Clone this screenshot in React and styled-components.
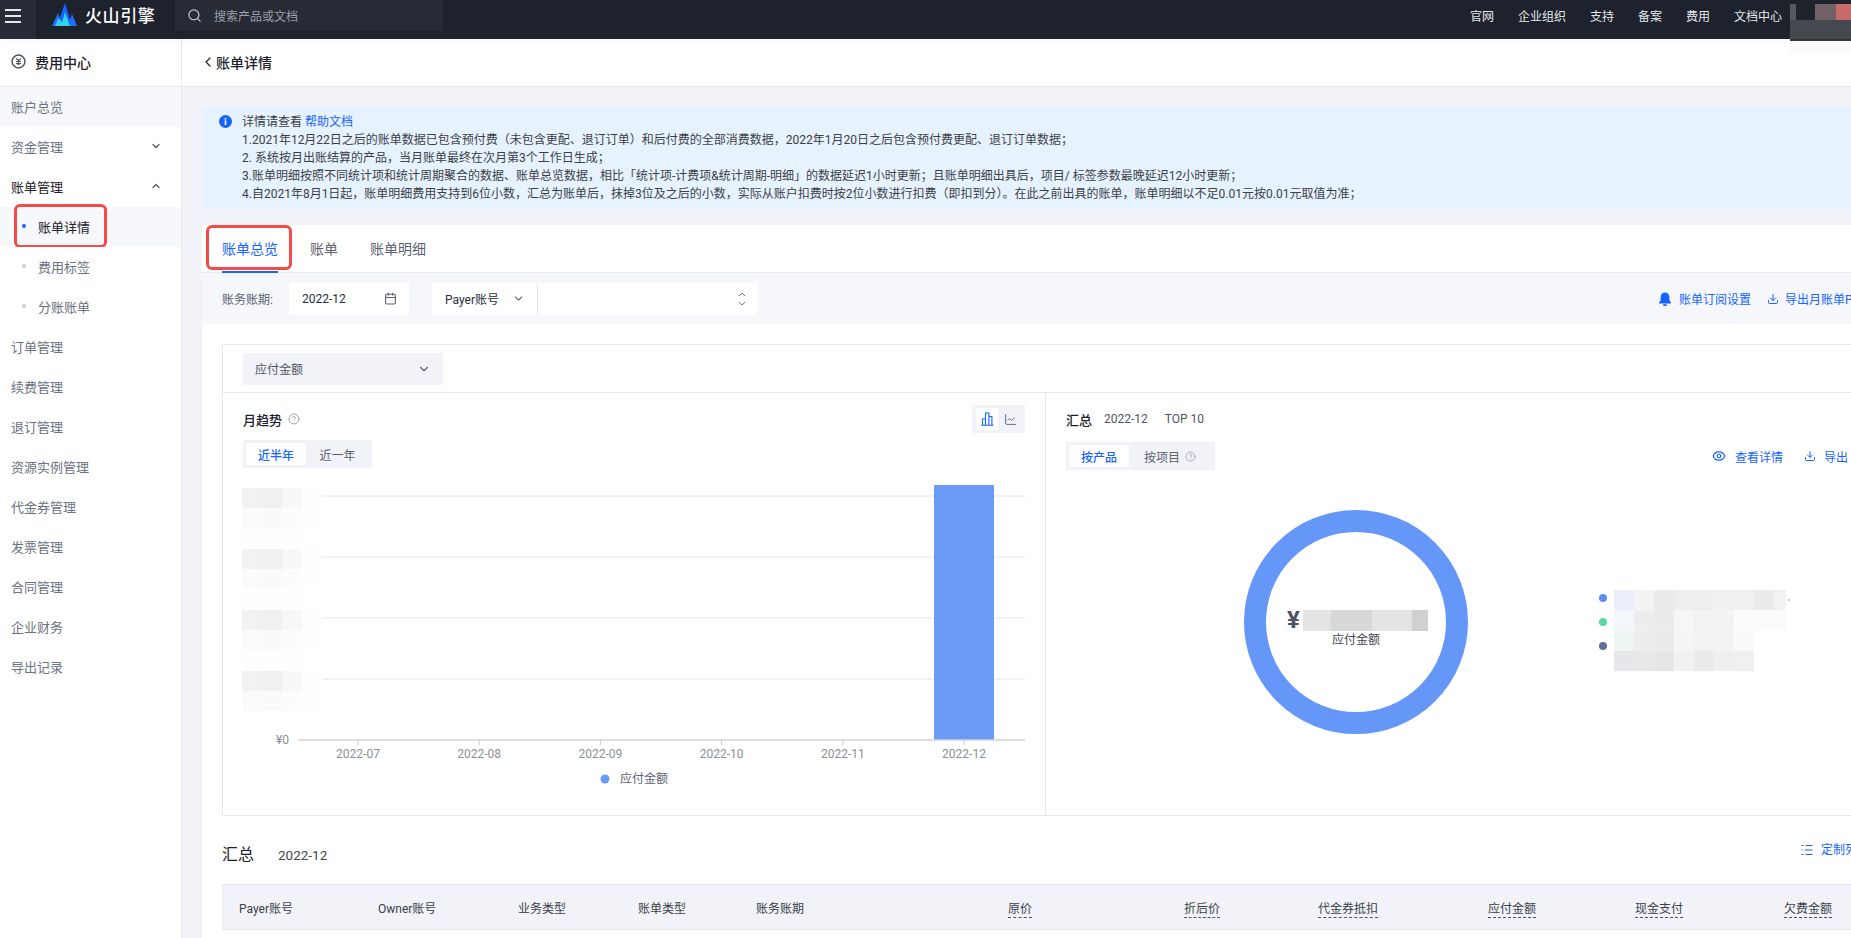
import styled, { createGlobalStyle } from "styled-components";
import { ChevronDown, ChevronLeft, ChevronUp, Search, Calendar, Download, Eye, CircleHelp, ChartLine } from "lucide-react";

const GlobalStyle = createGlobalStyle`
    html, body {
        margin: 0;
        padding: 0;
        height: 100%;
        overflow: hidden;
        background: #f1f3f8;
    }
    body {
        font-family: Roboto, "Noto Sans CJK SC", sans-serif;
        font-size: 12px;
        color: #42464e;
    }
    * {
        box-sizing: border-box;
    }
`;

const Page = styled.div`
    display: flex;
    flex-direction: column;
    height: 938px;
    width: 1851px;
    overflow: hidden;
`;

const TopBar = styled.header`
    position: relative;
    z-index: 1;
    flex: 0 0 39px;
    display: flex;
    background: #1d222c;
    color: #e4e6ea;
    box-shadow: 0 2px 8px rgba(0, 0, 0, 0.03);
`;

const MenuButton = styled.div`
    width: 36px;
    display: flex;
    flex-direction: column;
    gap: 4.5px;
    padding: 9px 5px 0;
    background: #262c38;
    span {
        height: 1.5px;
        width: 16px;
        background: #e5e7eb;
    }
`;

const Brand = styled.div`
    width: 139px;
    display: flex;
    align-items: flex-start;
    padding: 3px 0 0 16px;
    gap: 8px;
`;

const BrandName = styled.span`
    font-family: "Noto Sans CJK SC", sans-serif;
    font-size: 17px;
    font-weight: 500;
    letter-spacing: 0.6px;
    line-height: 24px;
    color: #fff;
`;

const SearchBox = styled.div`
    width: 268px;
    height: 31px;
    display: flex;
    align-items: center;
    gap: 12px;
    padding-left: 12px;
    background: #262b36;
    color: #9ba0ab;
`;

const TopNav = styled.nav`
    position: absolute;
    right: 69px;
    top: 0;
    height: 31px;
    display: flex;
    align-items: center;
    gap: 24px;
`;

const AvatarBlur = styled.div`
    position: absolute;
    right: 0;
    top: 4px;
    width: 61px;
    height: 49px;
    display: grid;
    grid-template-columns: 6px 19px 21px 15px;
    grid-template-rows: 16px 19px 2px 12px;
`;

const BlurCell = styled.i`
    display: block;
    background: ${(p) => p.$color};
    grid-column: ${(p) => p.$span || "auto"};
`;

const Body = styled.div`
    flex: 1;
    display: flex;
    min-height: 0;
`;

const Sidebar = styled.aside`
    flex: 0 0 182px;
    background: #fff;
    border-right: 1px solid #e5e8ef;
`;

const SideTitle = styled.div`
    height: 48px;
    display: flex;
    align-items: center;
    gap: 9px;
    padding: 0 0 2px 11px;
    font-size: 14px;
    font-weight: 500;
    color: #1d2129;
    border-bottom: 1px solid #e5e8ef;
`;

const SideItem = styled.div`
    height: 40px;
    display: flex;
    align-items: center;
    justify-content: space-between;
    padding: 0 19px 2px ${(p) => (p.$sub ? "22px" : "11px")};
    font-size: 13px;
    color: ${(p) => (p.$dark ? "#1d2129" : "#6b7280")};
    background: ${(p) => (p.$shaded ? "#f6f8fb" : "#fff")};
    position: relative;
`;

const SideLabel = styled.span`
    display: flex;
    align-items: center;
    gap: 12px;
`;

const Dot = styled.i`
    width: 4px;
    height: 4px;
    border-radius: 50%;
    background: ${(p) => (p.$active ? "#1664ff" : "#c9cdd4")};
`;

const RedMark = styled.div`
    position: absolute;
    border: 3.5px solid #f54a45;
    border-radius: 6px;
    pointer-events: none;
    left: ${(p) => p.$left}px;
    top: ${(p) => p.$top}px;
    width: ${(p) => p.$width}px;
    height: ${(p) => p.$height}px;
`;

const Main = styled.main`
    flex: 1;
    min-width: 0;
    overflow: hidden;
`;

const PageHead = styled.div`
    height: 48px;
    display: flex;
    align-items: center;
    padding: 0 0 2px 18px;
    font-size: 14px;
    font-weight: 500;
    color: #1d2129;
    background: #fff;
    border-bottom: 1px solid #e5e8ef;
`;

const Content = styled.div`
    width: 1705px;
    padding: 20px 0 0 20px;
`;

const Alert = styled.div`
    position: relative;
    height: 102px;
    padding: 6px 0 0 40px;
    background: #e6f2fe;
    line-height: 18px;
    color: #3b3f47;
    white-space: nowrap;
`;

const AlertIcon = styled.svg`
    position: absolute;
    left: 17px;
    top: 8px;
`;

const Link = styled.a`
    color: #1664ff;
    display: inline-flex;
    align-items: center;
    gap: ${(p) => p.$gap || 6}px;
`;

const Panel = styled.section`
    position: relative;
    margin-top: 16px;
    background: #fff;
    padding-bottom: 20px;
`;

const Tabs = styled.div`
    height: 48px;
    display: flex;
    gap: 32px;
    padding-left: 20px;
    border-bottom: 1px solid #e5e8ef;
`;

const Tab = styled.div`
    height: 48px;
    flex-shrink: 0;
    line-height: 48px;
    font-size: 14px;
    color: ${(p) => (p.$active ? "#1664ff" : "#5b6270")};
    border-bottom: ${(p) => (p.$active ? "2px solid #1664ff" : "none")};
`;

const FilterBar = styled.div`
    height: 51px;
    display: flex;
    align-items: center;
    justify-content: space-between;
    padding: 0 20px;
    background: #f5f7fb;
`;

const FilterGroup = styled.div`
    display: flex;
    align-items: center;
`;

const FilterLabel = styled.span`
    width: 67px;
    color: #5b6270;
`;

const Field = styled.div`
    width: ${(p) => p.$width}px;
    height: 32px;
    display: flex;
    align-items: center;
    justify-content: space-between;
    padding: 0 12px 0 13px;
    background: #fff;
    color: #2a2e36;
    margin-left: ${(p) => p.$gap || 0}px;
    border-left: ${(p) => (p.$divider ? "1px solid #e5e8ef" : "none")};
`;

const Actions = styled.div`
    display: flex;
    align-items: center;
    gap: ${(p) => p.$gap || 16}px;
`;

const Card = styled.div`
    margin: 20px 20px 0;
    border: 1px solid #e5e8ef;
`;

const CardTop = styled.div`
    height: 48px;
    display: flex;
    align-items: center;
    padding-left: 20px;
    border-bottom: 1px solid #e5e8ef;
`;

const MetricSelect = styled.div`
    width: 200px;
    height: 32px;
    display: flex;
    align-items: center;
    justify-content: space-between;
    padding: 0 12px;
    background: #f1f3f8;
    color: #4e5561;
`;

const Columns = styled.div`
    display: grid;
    grid-template-columns: 822px 1fr;
    height: 422px;
`;

const ChartPane = styled.div`
    padding-top: 12px;
    border-left: ${(p) => (p.$right ? "1px solid #e5e8ef" : "none")};
    overflow: hidden;
`;

const PaneHead = styled.div`
    height: 28px;
    display: flex;
    align-items: center;
    justify-content: space-between;
    padding: 0 20px;
`;

const PaneTitle = styled.div`
    display: flex;
    align-items: center;
    gap: 12px;
    color: #4e5561;
    strong {
        font-size: 13px;
        font-weight: 500;
        color: #1d2129;
    }
    span + span {
        margin-left: 5px;
    }
`;

const HelpIcon = styled(CircleHelp)`
    flex-shrink: 0;
    margin-left: ${(p) => p.$shift || 0}px;
`;

const ViewToggle = styled.div`
    width: 53px;
    height: 28px;
    display: flex;
    align-items: center;
    justify-content: space-between;
    padding: 0 4px;
    background: #f1f3f8;
`;

const ViewItem = styled.div`
    width: 22px;
    height: 22px;
    display: flex;
    align-items: center;
    justify-content: center;
    background: ${(p) => (p.$active ? "#fff" : "transparent")};
    color: ${(p) => (p.$active ? "#1664ff" : "#4e5561")};
`;

const PaneRow = styled.div`
    display: flex;
    align-items: center;
    justify-content: space-between;
    padding: 0 ${(p) => p.$right || 20}px 0 20px;
    margin-top: ${(p) => p.$top}px;
`;

const Segment = styled.div`
    height: 28px;
    display: flex;
    align-items: center;
    padding: 0 3px;
    background: #f1f3f8;
`;

const SegmentItem = styled.div`
    width: ${(p) => p.$width || 60}px;
    height: 22px;
    flex-shrink: 0;
    display: flex;
    align-items: center;
    justify-content: ${(p) => (p.$start ? "flex-start" : "center")};
    gap: 5px;
    background: ${(p) => (p.$active ? "#fff" : "transparent")};
    color: ${(p) => (p.$active ? "#1664ff" : "#5b6270")};
    font-weight: ${(p) => (p.$active ? 500 : 400)};
    padding-left: ${(p) => (p.$start ? "15px" : "0")};
    white-space: nowrap;
`;

const ChartSvg = styled.svg`
    display: block;
    margin-top: 8px;
    text {
        font-family: Roboto, "Noto Sans CJK SC", sans-serif;
    }
`;

const TableHead = styled.div`
    height: 68px;
    display: flex;
    align-items: flex-start;
    justify-content: space-between;
    padding: 0 10px 0 0;
    margin: 0 20px;
`;

const TableTitle = styled.div`
    display: flex;
    align-items: center;
    gap: 24px;
    margin-top: 27px;
    line-height: 24px;
    font-size: 13.5px;
    strong {
        font-size: 16px;
        font-weight: 400;
        color: #1d2129;
    }
`;

const CustomLink = styled(Link)`
    margin-top: 26px;
    line-height: 16px;
`;

const Table = styled.table`
    width: 1647px;
    margin: 0 20px;
    border-collapse: collapse;
    table-layout: fixed;
`;

const Th = styled.th`
    height: 45px;
    width: ${(p) => p.$width}px;
    padding: ${(p) => (p.$right ? "0 16px 0 0" : "0 0 0 17px")};
    text-align: ${(p) => (p.$right ? "right" : "left")};
    font-weight: 400;
    color: #3a3f48;
    background: #f1f3f8;
    border-top: 1px solid #e5e8ef;
    border-bottom: 1px solid #e5e8ef;
`;

const Hint = styled.span`
    padding-bottom: 1px;
    border-bottom: 1px dashed #4e5561;
`;

const navLinks = ["官网", "企业组织", "支持", "备案", "费用", "文档中心"];

const alertLines = [
    "1.2021年12月22日之后的账单数据已包含预付费（未包含更配、退订订单）和后付费的全部消费数据，2022年1月20日之后包含预付费更配、退订订单数据；",
    "2. 系统按月出账结算的产品，当月账单最终在次月第3个工作日生成；",
    "3.账单明细按照不同统计项和统计周期聚合的数据、账单总览数据，相比「统计项-计费项&统计周期-明细」的数据延迟1小时更新；且账单明细出具后，项目/ 标签参数最晚延迟12小时更新；",
    "4.自2021年8月1日起，账单明细费用支持到6位小数，汇总为账单后，抹掉3位及之后的小数，实际从账户扣费时按2位小数进行扣费（即扣到分）。在此之前出具的账单，账单明细以不足0.01元按0.01元取值为准；",
];

const lowerMenu = ["订单管理", "续费管理", "退订管理", "资源实例管理", "代金券管理", "发票管理", "合同管理", "企业财务", "导出记录"];

const months = ["2022-07", "2022-08", "2022-09", "2022-10", "2022-11", "2022-12"];

const columns = [
    { label: "Payer账号", width: 139 },
    { label: "Owner账号", width: 140 },
    { label: "业务类型", width: 120 },
    { label: "账单类型", width: 118 },
    { label: "账务账期", width: 141 },
    { label: "原价", width: 168, right: true },
    { label: "折后价", width: 188, right: true },
    { label: "代金券抵扣", width: 158, right: true },
    { label: "应付金额", width: 158, right: true },
    { label: "现金支付", width: 147, right: true },
    { label: "欠费金额", width: 149, right: true },
    { label: "", width: 21 },
];

const axisMosaic = [
    ["#f2f2f2", "#f0f0f0", "#f8f8f8", "#fdfdfd"],
    ["#fbfbfb", "#fafafa", "#fcfcfc", "#fefefe"],
    ["#fefefe", "#fefefe", "#fefefe", "#ffffff"],
];

const legendMosaic = [
    ["#eaeefb", "#f3f3f3", "#ebebeb", "#eeeeee", "#eeeeee", "#f0f0f0", "#f0f0f0", "#ebebeb", "#f2f2f2"],
    ["#f3f6fa", "#ededed", "#ebebeb", "#f6f6f6", "#f2f2f2", "#f3f3f3", "#fbfbfb", "#fbfbfb", "#fbfbfb"],
    ["#eef6f1", "#ededed", "#ebebeb", "#f5f5f5", "#f2f2f2", "#f3f3f3", "#fafafa", "#ffffff", "#ffffff"],
    ["#e6e7eb", "#e8e8e8", "#e6e6e6", "#f1f1f1", "#ebebeb", "#efefef", "#f0f0f0", "#ffffff", "#ffffff"],
];

const amountMosaic = [
    { x: 0, w: 28, c: "#e4e4e5" },
    { x: 28, w: 41, c: "#d8d8d9" },
    { x: 69, w: 40, c: "#e4e4e5" },
    { x: 109, w: 16, c: "#d0d0d2" },
];

const BrandLogo = () => (
    <svg width="25" height="23" viewBox="0 0 25 23">
        <polygon points="0,23 6,10 10,23" fill="#1f6fff" />
        <polygon points="5,23 13,0 20,23" fill="#1664ff" />
        <polygon points="16,23 20,11 25,23" fill="#1f6fff" />
        <polygon points="3,23 6.5,15 13,23" fill="#36d2e6" />
        <polygon points="9,23 13,9 18,23" fill="#2fd4e8" />
    </svg>
);

const CostIcon = () => (
    <svg width="15" height="15" viewBox="0 0 14 14" fill="none">
        <circle cx="7" cy="7" r="6" stroke="#4e5561" strokeWidth="1.4" />
        <path d="M4.8 4.2L7 6l2.2-1.8M4.6 7h4.8M4.6 9h4.8M7 6v4.4" stroke="#4e5561" strokeWidth="1.1" />
    </svg>
);

const BellIcon = () => (
    <svg width="14" height="14" viewBox="0 0 13 14" fill="#1664ff">
        <path d="M6.5 0.5a4.4 4.4 0 0 0-4.4 4.4v3.4L0.6 10.6v0.9h11.8v-0.9L10.9 8.3V4.9A4.4 4.4 0 0 0 6.5 0.5z" />
        <path d="M4.5 12.3h4a2 2 0 0 1-4 0z" />
    </svg>
);

const BarsIcon = () => (
    <svg width="13" height="14" viewBox="0 0 13 14" fill="none" stroke="currentColor" strokeWidth="1.1">
        <path d="M0.5 13.3h12M1.5 13V7h3v6M4.5 13V1h3.4v12M7.9 13V4.5h3v8.5" />
    </svg>
);

const ColumnsIcon = () => (
    <svg width="12" height="12" viewBox="0 0 12 12" fill="none" stroke="#1664ff" strokeWidth="1.2">
        <path d="M0.5 1.5h2M4.5 1.5h7M0.5 6h1M3.5 6h8M0.5 10.5h2M4.5 10.5h7" />
    </svg>
);

const StepperIcon = () => (
    <svg width="8" height="14" viewBox="0 0 8 14" fill="none" stroke="#6b7280" strokeWidth="1">
        <path d="M1 4l3-3 3 3M1 10l3 3 3-3" />
    </svg>
);

// y axis labels are blurred out in the screenshot, these blocks stand in for them
const AxisBlur = () => (
    <g>
        <rect x="14" y="7" width="84" height="206" fill="#fff" />
        {[12, 73, 134, 195].map((top) =>
            axisMosaic.map((row, r) =>
                row.map((color, c) => (
                    <rect key={`${top}-${r}-${c}`} x={19 + c * 20} y={top + r * 20} width="20" height={r === 2 && top === 195 ? 0 : 20} fill={color} />
                ))
            )
        )}
    </g>
);

const TrendChart = () => (
    <ChartSvg width="822" height="330" viewBox="0 0 822 330">
        {[20, 81, 142, 203].map((y) => (
            <line key={y} x1="98" x2="802" y1={y} y2={y} stroke="#e4e6ea" strokeWidth="1" />
        ))}
        <AxisBlur />
        <rect x="711" y="9" width="60" height="255" fill="#6a9bf9" />
        <line x1="75" x2="802" y1="264" y2="264" stroke="#d0d3d8" strokeWidth="1.6" />
        <text x="66" y="268" textAnchor="end" fontSize="12" fill="#8a8f98">¥0</text>
        {months.map((m, i) => {
            const x = 135 + i * 121.2;
            return (
                <g key={m}>
                    <line x1={x} x2={x} y1="264" y2="269" stroke="#c8ccd2" />
                    <text x={x} y="282" textAnchor="middle" fontSize="12" fill="#8a8f98">{m}</text>
                </g>
            );
        })}
        <circle cx="382" cy="303" r="4.5" fill="#6a9bf9" />
        <text x="397" y="307" fontSize="12" fill="#5b6270">应付金额</text>
    </ChartSvg>
);

const SummaryChart = () => (
    <ChartSvg width="823" height="320" viewBox="0 0 823 320">
        <circle cx="310" cy="144" r="101" fill="none" stroke="#6597f9" strokeWidth="22" />
        <text x="241" y="150" fontSize="24" fontWeight="700" fill="#4e5561">¥</text>
        {amountMosaic.map((cell) => (
            <rect key={cell.x} x={257 + cell.x} y="132" width={cell.w} height="21" fill={cell.c} />
        ))}
        <text x="310" y="166" textAnchor="middle" fontSize="12" fill="#42464e">应付金额</text>
        <circle cx="557" cy="120" r="4" fill="#5e8ff0" />
        <circle cx="557" cy="144" r="4" fill="#5ad8a6" />
        <circle cx="557" cy="168" r="4" fill="#5d7092" />
        {legendMosaic.map((row, r) =>
            row.map((color, c) => (
                <rect key={`${r}-${c}`} x={568 + c * 20} y={112 + r * 20.3} width={c === 8 ? 12 : 20} height="20.3" fill={color} />
            ))
        )}
        <circle cx="743" cy="122" r="0.7" fill="#6b7280" />
    </ChartSvg>
);

const App = () => {
    return (
        <Page lang="zh-CN">
            <GlobalStyle />
            <TopBar>
                <MenuButton>
                    <span />
                    <span />
                    <span />
                </MenuButton>
                <Brand>
                    <BrandLogo />
                    <BrandName>火山引擎</BrandName>
                </Brand>
                <SearchBox>
                    <Search size={15} color="#c3c6cc" />
                    搜索产品或文档
                </SearchBox>
                <TopNav>
                    {navLinks.map((item) => (
                        <span key={item}>{item}</span>
                    ))}
                </TopNav>
                <AvatarBlur>
                    <BlurCell $color="#55585e" />
                    <BlurCell $color="#1e222b" />
                    <BlurCell $color="#716065" />
                    <BlurCell $color="#c96a6c" />
                    <BlurCell $color="#46484f" $span="1 / 5" />
                    <BlurCell $color="#34363c" $span="1 / 5" />
                    <BlurCell $color="#fafafa" $span="1 / 5" />
                </AvatarBlur>
            </TopBar>
            <Body>
                <Sidebar>
                    <SideTitle>
                        <CostIcon />
                        费用中心
                    </SideTitle>
                    <SideItem $shaded>账户总览</SideItem>
                    <SideItem>
                        资金管理
                        <ChevronDown size={12} color="#4e5561" strokeWidth={2.4} />
                    </SideItem>
                    <SideItem $dark>
                        账单管理
                        <ChevronUp size={12} color="#4e5561" strokeWidth={2.4} />
                    </SideItem>
                    <SideItem $sub $dark $shaded>
                        <SideLabel>
                            <Dot $active />
                            账单详情
                        </SideLabel>
                        <RedMark $left={14} $top={-3} $width={93} $height={44} />
                    </SideItem>
                    <SideItem $sub>
                        <SideLabel>
                            <Dot />
                            费用标签
                        </SideLabel>
                    </SideItem>
                    <SideItem $sub>
                        <SideLabel>
                            <Dot />
                            分账账单
                        </SideLabel>
                    </SideItem>
                    {lowerMenu.map((item) => (
                        <SideItem key={item}>{item}</SideItem>
                    ))}
                </Sidebar>
                <Main>
                    <PageHead>
                        <ChevronLeft size={16} strokeWidth={1.8} />
                        账单详情
                    </PageHead>
                    <Content>
                        <Alert>
                            <AlertIcon width="13" height="13" viewBox="0 0 13 13">
                                <circle cx="6.5" cy="6.5" r="6.5" fill="#1664ff" />
                                <rect x="5.7" y="5.4" width="1.6" height="4.6" fill="#fff" />
                                <rect x="5.7" y="3" width="1.6" height="1.6" fill="#fff" />
                            </AlertIcon>
                            <div>
                                详情请查看 <Link>帮助文档</Link>
                            </div>
                            {alertLines.map((line) => (
                                <div key={line}>{line}</div>
                            ))}
                        </Alert>
                        <Panel>
                            <RedMark $left={4} $top={0} $width={86} $height={45} />
                            <Tabs>
                                <Tab $active>账单总览</Tab>
                                <Tab>账单</Tab>
                                <Tab>账单明细</Tab>
                            </Tabs>
                            <FilterBar>
                                <FilterGroup>
                                    <FilterLabel>账务账期:</FilterLabel>
                                    <Field $width={120}>
                                        2022-12
                                        <Calendar size={13} color="#5b6270" />
                                    </Field>
                                    <Field $width={105} $gap={23}>
                                        Payer账号
                                        <ChevronDown size={13} color="#5b6270" />
                                    </Field>
                                    <Field $width={221} $divider>
                                        <span />
                                        <StepperIcon />
                                    </Field>
                                </FilterGroup>
                                <Actions>
                                    <Link $gap={7}>
                                        <BellIcon />
                                        账单订阅设置
                                    </Link>
                                    <Link>
                                        <Download size={12} />
                                        导出月账单PDF
                                    </Link>
                                </Actions>
                            </FilterBar>
                            <Card>
                                <CardTop>
                                    <MetricSelect>
                                        应付金额
                                        <ChevronDown size={14} color="#5b6270" />
                                    </MetricSelect>
                                </CardTop>
                                <Columns>
                                    <ChartPane>
                                        <PaneHead>
                                            <PaneTitle>
                                                <strong>月趋势</strong>
                                                <HelpIcon size={12} color="#a0a4ab" $shift={-6} />
                                            </PaneTitle>
                                            <ViewToggle>
                                                <ViewItem $active>
                                                    <BarsIcon />
                                                </ViewItem>
                                                <ViewItem>
                                                    <ChartLine size={13} strokeWidth={1.6} />
                                                </ViewItem>
                                            </ViewToggle>
                                        </PaneHead>
                                        <PaneRow $top={7}>
                                            <Segment>
                                                <SegmentItem $active>近半年</SegmentItem>
                                                <SegmentItem $width={63}>近一年</SegmentItem>
                                            </Segment>
                                        </PaneRow>
                                        <TrendChart />
                                    </ChartPane>
                                    <ChartPane $right>
                                        <PaneHead>
                                            <PaneTitle>
                                                <strong>汇总</strong>
                                                <span>2022-12</span>
                                                <span>TOP 10</span>
                                            </PaneTitle>
                                        </PaneHead>
                                        <PaneRow $top={9} $right={18}>
                                            <Segment>
                                                <SegmentItem $active>按产品</SegmentItem>
                                                <SegmentItem $width={83} $start>
                                                    按项目
                                                    <HelpIcon size={11} color="#a0a4ab" />
                                                </SegmentItem>
                                            </Segment>
                                            <Actions $gap={21}>
                                                <Link $gap={9}>
                                                    <Eye size={14} />
                                                    查看详情
                                                </Link>
                                                <Link $gap={8}>
                                                    <Download size={12} />
                                                    导出
                                                </Link>
                                            </Actions>
                                        </PaneRow>
                                        <SummaryChart />
                                    </ChartPane>
                                </Columns>
                            </Card>
                            <TableHead>
                                <TableTitle>
                                    <strong>汇总</strong>
                                    <span>2022-12</span>
                                </TableTitle>
                                <CustomLink $gap={8}>
                                    <ColumnsIcon />
                                    定制列
                                </CustomLink>
                            </TableHead>
                            <Table>
                                <thead>
                                    <tr>
                                        {columns.map((col) => (
                                            <Th key={col.width + col.label} $width={col.width} $right={col.right}>
                                                {col.right ? <Hint>{col.label}</Hint> : col.label}
                                            </Th>
                                        ))}
                                    </tr>
                                </thead>
                            </Table>
                        </Panel>
                    </Content>
                </Main>
            </Body>
        </Page>
    );
};

export default App;
